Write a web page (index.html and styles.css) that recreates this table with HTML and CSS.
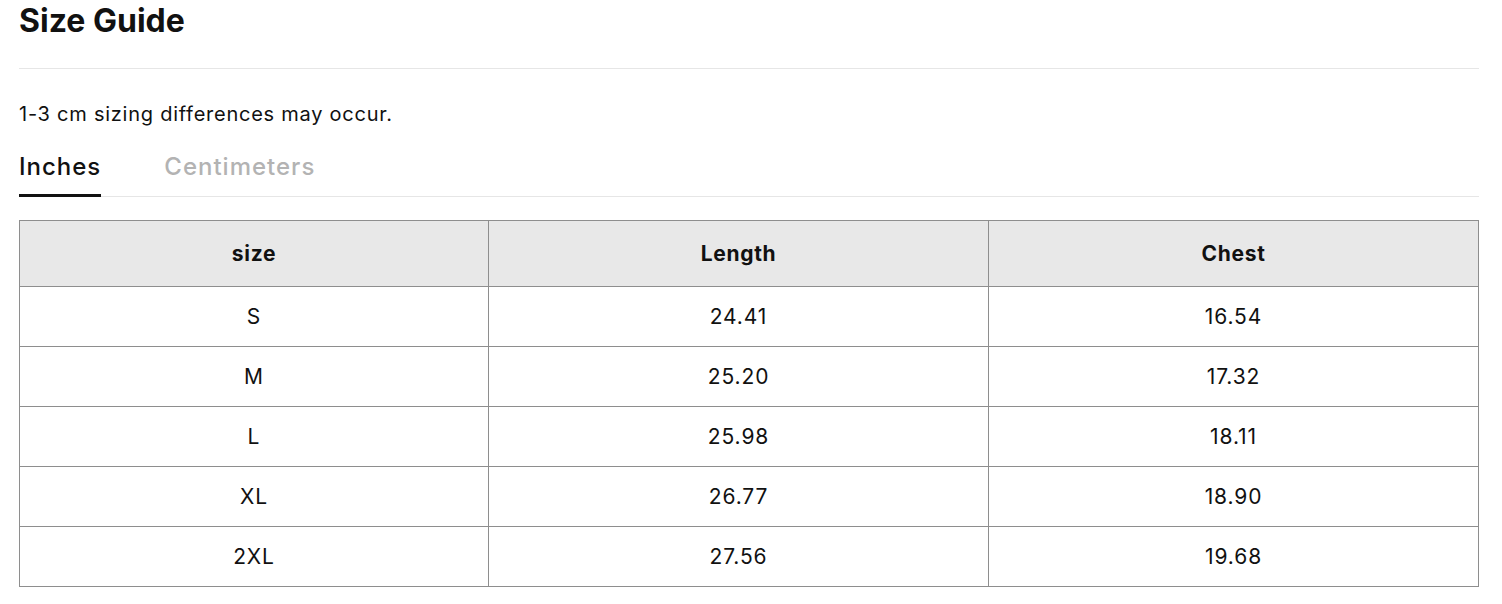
FILE: index.html
```html
<!DOCTYPE html>
<html lang="en">
<head>
<meta charset="utf-8">
<title>Size Guide</title>
<link rel="stylesheet" href="styles.css">
</head>
<body>
<div class="page">
  <h1 class="title">Size Guide</h1>
  <p class="note">1-3 cm sizing differences may occur.</p>
  <div class="tabs">
    <div class="tab active">Inches</div>
    <div class="tab">Centimeters</div>
  </div>
  <table class="sizes">
    <colgroup>
      <col class="c1">
      <col class="c2">
      <col class="c3">
    </colgroup>
    <thead>
      <tr><th>size</th><th>Length</th><th>Chest</th></tr>
    </thead>
    <tbody>
      <tr><td>S</td><td>24.41</td><td>16.54</td></tr>
      <tr><td>M</td><td>25.20</td><td>17.32</td></tr>
      <tr><td>L</td><td>25.98</td><td>18.11</td></tr>
      <tr><td>XL</td><td>26.77</td><td>18.90</td></tr>
      <tr><td>2XL</td><td>27.56</td><td>19.68</td></tr>
    </tbody>
  </table>
</div>
</body>
</html>
```

FILE: styles.css
```css
html, body {
  margin: 0;
  padding: 0;
  background: #ffffff;
}
body {
  font-family: Inter, "Liberation Sans", Arial, sans-serif;
  color: #111111;
}
.page {
  padding: 1px 23px 0 19px;
}
.title {
  margin: 0;
  font-size: 32px;
  line-height: 40px;
  font-weight: 700;
  padding-bottom: 27px;
  border-bottom: 1px solid #e6e6e6;
}
.note {
  margin: 31px 0 0;
  font-size: 20px;
  line-height: 28px;
  letter-spacing: 0.75px;
}
.tabs {
  display: flex;
  gap: 63px;
  margin-top: 23px;
  border-bottom: 1px solid #e6e6e6;
}
.tab {
  font-size: 24px;
  line-height: 32px;
  font-weight: 500;
  letter-spacing: 1px;
  color: #b3b3b3;
  padding-bottom: 11px;
  border-bottom: 3px solid transparent;
  margin-bottom: -1px;
}
.tab.active {
  color: #111111;
  border-bottom-color: #111111;
}
.sizes {
  margin-top: 23px;
  width: 100%;
  border-collapse: collapse;
  table-layout: fixed;
  font-size: 21px;
}
.c1 { width: 469px; }
.c2 { width: 500px; }
.c3 { width: auto; }
.sizes th,
.sizes td {
  border: 1px solid #8e8e8e;
  text-align: center;
  vertical-align: middle;
  padding: 0;
}
.sizes th {
  background: #e8e8e8;
  font-weight: 700;
  letter-spacing: 0.7px;
  height: 65px;
}
.sizes td {
  letter-spacing: 0.9px;
  height: 59px;
}
```
